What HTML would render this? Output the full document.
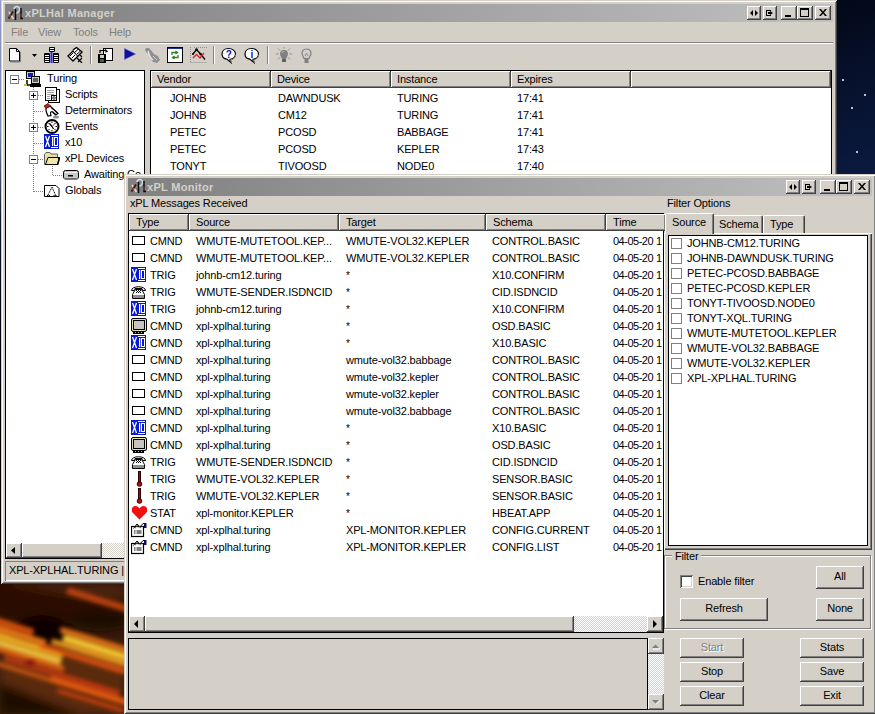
<!DOCTYPE html><html><head><meta charset="utf-8"><style>
*{margin:0;padding:0;box-sizing:border-box}
html,body{width:875px;height:714px;overflow:hidden}
body{position:relative;background:#0a1634;font-family:"Liberation Sans", sans-serif;font-size:11px;color:#000;letter-spacing:-0.15px}
.a{position:absolute}
.t{white-space:nowrap;line-height:13px}
.face{background:#d4d0c8}
.frame{background:#d4d0c8;box-shadow:inset 1px 1px #d4d0c8,inset -1px -1px #404040,inset 2px 2px #fff,inset -2px -2px #808080}
.btn{background:#d4d0c8;box-shadow:inset -1px -1px #404040,inset 1px 1px #fff,inset -2px -2px #808080,inset 2px 2px #d4d0c8}
.hdr{background:#d4d0c8;box-shadow:inset -1px -1px #404040,inset 1px 1px #fff,inset -2px -2px #808080}
.title{background:linear-gradient(90deg,#808080,#c0c0c0);color:#d4d0c8;font-weight:bold;letter-spacing:0.3px}
.white{background:#fff}
.blk{border:1px solid #000}
.dither{background-color:#fff;background-image:linear-gradient(45deg,#d4d0c8 25%,transparent 25%,transparent 75%,#d4d0c8 75%),linear-gradient(45deg,#d4d0c8 25%,transparent 25%,transparent 75%,#d4d0c8 75%);background-size:2px 2px;background-position:0 0,1px 1px}
.clip{overflow:hidden}
svg{display:block}
</style></head><body><div class="a" style="left:0;top:0;width:875px;height:714px;background:#0a1634"></div>
<div class="a" style="left:0;top:0;width:1px;height:584px;background:linear-gradient(180deg,#9898d0 0,#7888a8 130px,#101830 220px,#000 400px,#100804 583px)"></div>
<div class="a" style="left:836px;top:0;width:39px;height:175px;background:linear-gradient(160deg,#020816 0%,#06102a 40%,#0a1a40 100%)"></div>
<div class="a " style="left:842px;top:79px;width:2px;height:2px;background:#b8c0d8"></div>
<div class="a " style="left:864px;top:94px;width:2px;height:2px;background:#b8c0d8"></div>
<div class="a " style="left:851px;top:107px;width:2px;height:2px;background:#b8c0d8"></div>
<div class="a " style="left:856px;top:151px;width:2px;height:2px;background:#b8c0d8"></div>
<svg class="a" style="left:0;top:583px" width="124" height="131" viewBox="0 0 124 131">
<defs><filter id="bl" x="-30%" y="-30%" width="160%" height="160%"><feGaussianBlur stdDeviation="2"/></filter>
<filter id="bl2" x="-30%" y="-30%" width="160%" height="160%"><feGaussianBlur stdDeviation="5"/></filter></defs>
<rect width="124" height="131" fill="#3a1a0a"/>
<g filter="url(#bl2)">
<rect x="-10" y="-10" width="140" height="50" fill="#2a1006"/>
<path d="M0 0 H124 V20 L60 10 Z" fill="#4a2410"/>
<ellipse cx="42" cy="52" rx="30" ry="20" fill="#080302"/>
<ellipse cx="100" cy="38" rx="30" ry="10" fill="#1a0a04"/>
<path d="M0 60 L124 80 L124 131 H0 Z" fill="#5a2a0c"/>
<path d="M0 100 L80 131 H0 Z" fill="#1e0c04"/>
</g>
<g filter="url(#bl)" transform="rotate(17 62 65)">
<rect x="50" y="5" width="90" height="7" fill="#b84010"/>
<rect x="-30" y="55" width="60" height="6" fill="#d85010"/>
<rect x="-30" y="62" width="75" height="6" fill="#f07818"/>
<rect x="-30" y="69" width="95" height="6" fill="#f8b020"/>
<rect x="-20" y="76" width="85" height="5" fill="#ffd040"/>
<rect x="-30" y="82" width="100" height="5" fill="#e86010"/>
<rect x="55" y="45" width="90" height="6" fill="#e07018"/>
<rect x="60" y="52" width="90" height="6" fill="#ffd030"/>
<rect x="50" y="59" width="90" height="5" fill="#f8a020"/>
<rect x="40" y="66" width="90" height="6" fill="#d85010"/>
<rect x="10" y="89" width="120" height="5" fill="#c03808"/>
<rect x="-20" y="97" width="80" height="4" fill="#d05810"/>
<rect x="60" y="95" width="90" height="6" fill="#e85a10"/>
<rect x="70" y="105" width="70" height="4" fill="#c84010"/>
</g>
<ellipse cx="30" cy="80" rx="5" ry="3" fill="#801808" filter="url(#bl)"/>
</svg>
<div class="a frame" style="left:1px;top:0px;width:836px;height:584px;"></div>
<div class="a title a" style="left:5px;top:4px;width:828px;height:18px;"></div>
<div class="a " style="left:7px;top:5px;width:16px;height:16px;"><svg width="16" height="16" viewBox="0 0 16 16"><path d="M2 7 L6.5 14" stroke="#e8dcd8" stroke-width="1.5"/><path d="M1.5 13.5 L6 6.5" stroke="#3a1408" stroke-width="1.8"/><path d="M2.5 12 L4 10" stroke="#a04018" stroke-width="1.5"/><path d="M7 4 C7 0.5 13 0.5 12.5 4.5 C12 7.5 9.5 8.5 8 8" stroke="#d0dce8" stroke-width="1.5" fill="none"/><path d="M8.5 4 V15" stroke="#0a0a0a" stroke-width="1.5"/><path d="M14 3 V13.5 H16" stroke="#0a0a0a" stroke-width="1.4" fill="none"/><path d="M14 9 V12" stroke="#8a3a10" stroke-width="1.4"/></svg></div>
<div class="a t " style="left:25px;top:7px;color:#d4d0c8;font-weight:bold;letter-spacing:0.3px">xPLHal Manager</div>
<div class="a btn" style="left:815px;top:6px;width:16px;height:14px;"><svg width="16" height="14"><path d="M4 3h2l2 2.5 2-2.5h2l-3 3.5 3 3.5h-2l-2-2.5-2 2.5h-2l3-3.5z" fill="#000"/></svg></div><div class="a btn" style="left:797px;top:6px;width:16px;height:14px;"><svg width="16" height="14"><path d="M3 2h9v9h-9z M4 4v6h7v-6z" fill="#000" fill-rule="evenodd"/></svg></div><div class="a btn" style="left:781px;top:6px;width:16px;height:14px;"><svg width="16" height="14"><rect x="4" y="9" width="6" height="2" fill="#000"/></svg></div><div class="a btn" style="left:763px;top:6px;width:14px;height:14px;"><svg width="14" height="14"><path d="M3 4h5v1h-4v4h4v1h-5z M5 6h2v-1l3 2-3 2v-1h-2z" fill="#000"/></svg></div><div class="a btn" style="left:747px;top:6px;width:14px;height:14px;"><svg width="14" height="14"><path d="M6 4v6l-3-3z M8 4v6l3-3z" fill="#000"/></svg></div>
<div class="a t " style="left:11px;top:26px;color:#808080">File</div>
<div class="a t " style="left:38px;top:26px;color:#808080">View</div>
<div class="a t " style="left:73px;top:26px;color:#808080">Tools</div>
<div class="a t " style="left:109px;top:26px;color:#808080">Help</div>
<div class="a " style="left:5px;top:42px;width:828px;height:1px;background:#808080"></div>
<div class="a " style="left:5px;top:43px;width:828px;height:1px;background:#fff"></div>
<div class="a white blk" style="left:5px;top:70px;width:140px;height:489px;"></div>
<div class="a white blk" style="left:150px;top:70px;width:682px;height:489px;"></div>
<svg class="a" style="left:8px;top:47px" width="13" height="16" viewBox="0 0 13 16"><path d="M1.5 1.5h7l3 3v9.5h-10z" fill="#fff" stroke="#000"/><path d="M8.5 1.5v3h3" fill="none" stroke="#000"/><path d="M12.5 5v10h-10" stroke="#808080" fill="none"/></svg>
<svg class="a" style="left:32px;top:54px" width="5" height="3" viewBox="0 0 5 3"><path d="M0 0h5l-2.5 3z" fill="#000"/></svg>
<svg class="a" style="left:44px;top:47px" width="16" height="16" viewBox="0 0 16 16"><g fill="#000"><rect x="5" y="0" width="6" height="5" rx="1"/><rect x="0" y="6" width="6" height="10" rx="1"/><rect x="9" y="6" width="6" height="10" rx="1"/></g><g fill="#fff"><rect x="6" y="1" width="4" height="1"/><rect x="6" y="3" width="4" height="1"/><rect x="1" y="8" width="4" height="1"/><rect x="1" y="10" width="4" height="1"/><rect x="1" y="12" width="4" height="1"/><rect x="1" y="14" width="4" height="1"/><rect x="10" y="8" width="4" height="1"/><rect x="10" y="10" width="4" height="1"/><rect x="10" y="12" width="4" height="1"/><rect x="10" y="14" width="4" height="1"/></g><rect x="6.5" y="5" width="2" height="11" fill="#2828e0"/></svg>
<svg class="a" style="left:67px;top:47px" width="17" height="16" viewBox="0 0 17 16"><path d="M1 9 L6 4 L11 9 L6 14 Z" fill="#fff" stroke="#000" stroke-width="1.4"/><path d="M6 3 L9.5 0.5 L15 5 L11 9" fill="#fff" stroke="#000" stroke-width="1.4"/><path d="M3 9 L6 6 M5 11 L8 8 M8 5 L11 2.5 M10 7 L13 4.5" stroke="#000"/><path d="M10 11 L15 16 M15 11 L11 15 M13 8 L15 10" stroke="#000" stroke-width="1.2"/></svg>
<div class="a " style="left:90px;top:46px;width:1px;height:18px;background:#808080"></div>
<div class="a " style="left:91px;top:46px;width:1px;height:18px;background:#fff"></div>
<svg class="a" style="left:98px;top:47px" width="16" height="17" viewBox="0 0 16 17"><rect x="5.5" y="1.5" width="9" height="12" fill="#fff" stroke="#000"/><path d="M2 6 V3.5 H8 M7 2.5 L9 4.5 L7 5" stroke="#000" fill="none" stroke-width="1.2"/><rect x="0" y="7" width="8" height="9" fill="#000"/><rect x="2" y="8" width="4" height="3" fill="#d8d0b0"/><rect x="2" y="12" width="4" height="3" fill="#406040"/></svg>
<svg class="a" style="left:124px;top:48px" width="12" height="12" viewBox="0 0 12 12"><path d="M0.5 0.5 L11.5 6 L0.5 11.5z" fill="#1010a0" stroke="#6060c0" stroke-width="0.6"/></svg>
<svg class="a" style="left:144px;top:47px" width="17" height="17" viewBox="0 0 17 17"><path d="M1 3 C1 0.5 5 0.5 6 2 L10 7 L14 9 L16 13 L13 16 L9 15 L6 11 L5 7 L3 6 Z" fill="#909090"/><path d="M4 4 C5 8 6 11 9 13" stroke="#e8e8e8" stroke-width="1.3" fill="none"/><path d="M9 9 L13 13" stroke="#d0d0d0" fill="none"/></svg>
<svg class="a" style="left:167px;top:47px" width="16" height="16" viewBox="0 0 16 16"><rect x="0.5" y="0.5" width="15" height="15" fill="#fff" stroke="#000"/><rect x="1" y="1" width="14" height="1" fill="#2030a0"/><path d="M5 8 V5.5 H10 M8.5 4 L10.5 5.5 L8.5 7 M11 8 V10.5 H6 M7.5 9 L5.5 10.5 L7.5 12" stroke="#308030" stroke-width="1.3" fill="none"/></svg>
<svg class="a" style="left:190px;top:47px" width="17" height="16" viewBox="0 0 17 16"><path d="M0.5 0 V16 M0.5 15.5 H17 M4 0.5H17" stroke="#909090" stroke-dasharray="1 1"/><path d="M3 7 L6.5 2.5 L10.5 7 L15 12.5" stroke="#000" stroke-width="1.3" fill="none"/><path d="M3 11 L6.5 7.5 L10 11 L14 6" stroke="#e02020" stroke-width="1.3" fill="none"/><g fill="#000"><circle cx="6.5" cy="2.5" r="1.2"/><circle cx="10.5" cy="7" r="1.2"/><circle cx="3" cy="7" r="1"/></g></svg>
<div class="a " style="left:213px;top:46px;width:1px;height:18px;background:#808080"></div>
<div class="a " style="left:214px;top:46px;width:1px;height:18px;background:#fff"></div>
<svg class="a" style="left:221px;top:47px" width="16" height="17" viewBox="0 0 16 17"><path d="M7.5 1.5 C11.5 1.5 14.5 4 14.5 7 C14.5 10 12 12 9 12.3 L10 15.5 L6 12.2 C3 11.8 1 9.8 1 7 C1 4 3.5 1.5 7.5 1.5z" fill="#fff" stroke="#000" stroke-width="1.2"/><path d="M14.8 7.5 C14.5 10.5 12.5 12.5 9.5 13 L10.5 16" stroke="#808080" fill="none"/><text x="7.7" y="10.5" font-size="10" font-weight="bold" text-anchor="middle" fill="#1010c0" font-family="Liberation Sans">?</text></svg>
<svg class="a" style="left:244px;top:47px" width="16" height="17" viewBox="0 0 16 17"><path d="M7.5 1.5 C11.5 1.5 14.5 4 14.5 7 C14.5 10 12 12 9 12.3 L10 15.5 L6 12.2 C3 11.8 1 9.8 1 7 C1 4 3.5 1.5 7.5 1.5z" fill="#fff" stroke="#000" stroke-width="1.2"/><path d="M14.8 7.5 C14.5 10.5 12.5 12.5 9.5 13 L10.5 16" stroke="#808080" fill="none"/><text x="7.7" y="10.5" font-size="10" font-weight="bold" text-anchor="middle" fill="#1010c0" font-family="Liberation Sans">i</text></svg>
<div class="a " style="left:267px;top:46px;width:1px;height:18px;background:#808080"></div>
<div class="a " style="left:268px;top:46px;width:1px;height:18px;background:#fff"></div>
<svg class="a" style="left:276px;top:47px" width="16" height="17" viewBox="0 0 16 17"><path d="M8 3 C11 3 12 5 12 7 C12 9 10.5 10 10 12 H6 C5.5 10 4 9 4 7 C4 5 5 3 8 3z" fill="#808080"/><rect x="6" y="12" width="4" height="3" fill="#606060"/><path d="M0 7h2.5 M13.5 7h2.5 M2 1.5l2 2 M14 1.5l-2 2 M2 12.5l2-2 M14 12.5l-2-2 M8 0v1.5" stroke="#909090"/><path d="M6 6 C6 5 7 4.5 8 4.5" stroke="#c0c0c0" fill="none"/></svg>
<svg class="a" style="left:301px;top:48px" width="11" height="16" viewBox="0 0 11 16"><path d="M5.5 1 C9 1 10 3 10 5.5 C10 7.5 8.5 8.5 8 10.5 H3 C2.5 8.5 1 7.5 1 5.5 C1 3 2 1 5.5 1z" fill="#d0d0d0" stroke="#808080" stroke-width="1.2"/><rect x="3.5" y="11" width="4" height="4" fill="#808080"/><path d="M4 8 L5.5 5 L7 8" stroke="#909090" fill="none"/></svg>
<div class="a " style="left:33px;top:87px;width:1px;height:105px;background-image:linear-gradient(180deg,#808080 50%,transparent 50%);background-size:1px 2px"></div>
<div class="a " style="left:52px;top:166px;width:1px;height:10px;background-image:linear-gradient(180deg,#808080 50%,transparent 50%);background-size:1px 2px"></div>
<div class="a " style="left:34px;top:95px;width:10px;height:1px;background-image:linear-gradient(90deg,#808080 50%,transparent 50%);background-size:2px 1px"></div>
<div class="a " style="left:34px;top:111px;width:10px;height:1px;background-image:linear-gradient(90deg,#808080 50%,transparent 50%);background-size:2px 1px"></div>
<div class="a " style="left:34px;top:127px;width:10px;height:1px;background-image:linear-gradient(90deg,#808080 50%,transparent 50%);background-size:2px 1px"></div>
<div class="a " style="left:34px;top:143px;width:10px;height:1px;background-image:linear-gradient(90deg,#808080 50%,transparent 50%);background-size:2px 1px"></div>
<div class="a " style="left:34px;top:159px;width:10px;height:1px;background-image:linear-gradient(90deg,#808080 50%,transparent 50%);background-size:2px 1px"></div>
<div class="a " style="left:34px;top:191px;width:10px;height:1px;background-image:linear-gradient(90deg,#808080 50%,transparent 50%);background-size:2px 1px"></div>
<div class="a " style="left:19px;top:79px;width:5px;height:1px;background-image:linear-gradient(90deg,#808080 50%,transparent 50%);background-size:2px 1px"></div>
<div class="a " style="left:53px;top:175px;width:10px;height:1px;background-image:linear-gradient(90deg,#808080 50%,transparent 50%);background-size:2px 1px"></div>
<div class="a " style="left:10px;top:75px;width:9px;height:9px;background:#fff;border:1px solid #808080"></div><div class="a " style="left:12px;top:79px;width:5px;height:1px;background:#000"></div>
<div class="a " style="left:29px;top:91px;width:9px;height:9px;background:#fff;border:1px solid #808080"></div><div class="a " style="left:31px;top:95px;width:5px;height:1px;background:#000"></div><div class="a " style="left:33px;top:93px;width:1px;height:5px;background:#000"></div>
<div class="a " style="left:29px;top:123px;width:9px;height:9px;background:#fff;border:1px solid #808080"></div><div class="a " style="left:31px;top:127px;width:5px;height:1px;background:#000"></div><div class="a " style="left:33px;top:125px;width:1px;height:5px;background:#000"></div>
<div class="a " style="left:29px;top:155px;width:9px;height:9px;background:#fff;border:1px solid #808080"></div><div class="a " style="left:31px;top:159px;width:5px;height:1px;background:#000"></div>
<svg class="a" style="left:24px;top:71px" width="17" height="17" viewBox="0 0 17 17"><rect x="2.5" y="0.5" width="8" height="7" fill="#d4d0c8" stroke="#000"/><rect x="4" y="2" width="5" height="4" fill="#1020c0"/><rect x="7.5" y="5.5" width="8" height="7" fill="#d4d0c8" stroke="#000"/><rect x="9" y="7" width="5" height="4" fill="#606060"/><rect x="6" y="13" width="11" height="3" fill="#000"/><path d="M1 14h5 M3 9v5" stroke="#000" stroke-width="1.5"/><rect x="0" y="13" width="3" height="2" fill="#d0c040"/></svg>
<div class="a t " style="left:47px;top:72px;">Turing</div>
<svg class="a" style="left:45px;top:87px" width="15" height="16" viewBox="0 0 15 16"><rect x="3.5" y="2.5" width="11" height="13" fill="#fff" stroke="#000"/><rect x="0.5" y="0.5" width="11" height="13" fill="#fff" stroke="#000"/><path d="M2 3.5h7 M2 5.5h7 M2 7.5h7 M2 9.5h3 M2 11.5h3" stroke="#a0a0a0"/><rect x="6.5" y="8.5" width="5" height="5" fill="#fff" stroke="#000"/><circle cx="9" cy="11" r="1.3" fill="none" stroke="#000" stroke-width="0.8"/></svg>
<div class="a t " style="left:65px;top:88px;">Scripts</div>
<svg class="a" style="left:43px;top:103px" width="17" height="16" viewBox="0 0 17 16"><path d="M3 5 C2.5 8 4 11 5 13 L8 12.5 C7 10.5 7.5 8.5 9 8.5 L12.5 12 L15 10.5 L7 3 Z" fill="#fff" stroke="#000" stroke-width="1.2"/><path d="M8 4.5 L14 9.5 M9.5 8.5 L13 11.5" stroke="#000"/><path d="M1 3 L5 0.5 L7.5 3 L3 5.5 Z" fill="#c82010" stroke="#500" stroke-width="0.8"/><ellipse cx="13" cy="14" rx="3" ry="1.6" fill="#909090"/></svg>
<div class="a t " style="left:65px;top:104px;">Determinators</div>
<svg class="a" style="left:44px;top:119px" width="16" height="16" viewBox="0 0 16 16"><circle cx="8" cy="7.5" r="6.5" fill="#fff" stroke="#000" stroke-width="2"/><path d="M8 2.5v1.5 M8 11v1.5 M3 7.5h1.5 M11.5 7.5h1.5 M4.5 4l1 1 M11.5 4l-1 1 M4.5 11l1-1 M11.5 11l-1-1" stroke="#000"/><path d="M8 7.5 L5.5 4.5 M8 7.5 L9.5 10" stroke="#000" stroke-width="1.3"/><path d="M8 7.5 L11 4.5" stroke="#e02020"/></svg>
<div class="a t " style="left:65px;top:120px;">Events</div>
<div class="a " style="left:44px;top:134px;width:16px;height:16px;"><svg width="16" height="16"><rect x="0" y="0" width="15" height="15" fill="#0818d0"/><path d="M1.5 2 L5.5 13 M5.5 2 L1.5 13" stroke="#fff" stroke-width="1.3"/><rect x="7" y="1" width="7" height="1" fill="#fff"/><rect x="7" y="13" width="7" height="1" fill="#fff"/><rect x="8" y="3" width="1.3" height="9" fill="#fff"/><rect x="10.5" y="3.5" width="3" height="8" fill="none" stroke="#fff"/></svg></div>
<div class="a t " style="left:65px;top:136px;">x10</div>
<svg class="a" style="left:44px;top:152px" width="16" height="13" viewBox="0 0 16 13"><path d="M0.5 2.5 L2 0.5 H6 L7 2 H13.5 V12.5 H0.5 Z" fill="#e8e0a0" stroke="#606060"/><path d="M1.5 12.5 L4 5.5 H15.5 L13.5 12.5 Z" fill="#f0e8a8" stroke="#000"/><path d="M14 6 L15.5 6 L13.5 13 H1.5" stroke="#000" stroke-width="1.5" fill="none"/></svg>
<div class="a t " style="left:65px;top:152px;">xPL Devices</div>
<svg class="a" style="left:63px;top:170px" width="16" height="10" viewBox="0 0 16 10"><rect x="0.5" y="0.5" width="15" height="8.5" rx="2" fill="#c8c8c8" stroke="#000"/><rect x="5" y="5" width="5" height="1.5" fill="#000"/><path d="M2 2.5h12" stroke="#f0f0f0"/><path d="M1 8.5h14" stroke="#707070"/></svg>
<div class="a t " style="left:84px;top:168px;">Awaiting Co</div>
<svg class="a" style="left:44px;top:185px" width="16" height="12" viewBox="0 0 16 12"><path d="M0.5 0.5h11.5l3 3v8h-14.5z" fill="#fff" stroke="#000"/><path d="M4 10 L8 2 L11.5 10 M3 10.5h3 M9.5 10.5h3" stroke="#000" fill="none" stroke-dasharray="1.2 0.6"/></svg>
<div class="a t " style="left:65px;top:184px;">Globals</div>
<div class="a hdr" style="left:151px;top:71px;width:680px;height:17px;"></div>
<div class="a hdr" style="left:151px;top:71px;width:120px;height:17px;"><div class="t" style="position:absolute;left:6px;top:2px">Vendor</div></div>
<div class="a hdr" style="left:271px;top:71px;width:120px;height:17px;"><div class="t" style="position:absolute;left:6px;top:2px">Device</div></div>
<div class="a hdr" style="left:391px;top:71px;width:120px;height:17px;"><div class="t" style="position:absolute;left:6px;top:2px">Instance</div></div>
<div class="a hdr" style="left:511px;top:71px;width:120px;height:17px;"><div class="t" style="position:absolute;left:6px;top:2px">Expires</div></div>
<div class="a hdr" style="left:631px;top:71px;width:200px;height:17px;"></div>
<div class="a t " style="left:170px;top:92px;">JOHNB</div>
<div class="a t " style="left:278px;top:92px;">DAWNDUSK</div>
<div class="a t " style="left:397px;top:92px;">TURING</div>
<div class="a t " style="left:517px;top:92px;">17:41</div>
<div class="a t " style="left:170px;top:109px;">JOHNB</div>
<div class="a t " style="left:278px;top:109px;">CM12</div>
<div class="a t " style="left:397px;top:109px;">TURING</div>
<div class="a t " style="left:517px;top:109px;">17:41</div>
<div class="a t " style="left:170px;top:126px;">PETEC</div>
<div class="a t " style="left:278px;top:126px;">PCOSD</div>
<div class="a t " style="left:397px;top:126px;">BABBAGE</div>
<div class="a t " style="left:517px;top:126px;">17:41</div>
<div class="a t " style="left:170px;top:143px;">PETEC</div>
<div class="a t " style="left:278px;top:143px;">PCOSD</div>
<div class="a t " style="left:397px;top:143px;">KEPLER</div>
<div class="a t " style="left:517px;top:143px;">17:43</div>
<div class="a t " style="left:170px;top:160px;">TONYT</div>
<div class="a t " style="left:278px;top:160px;">TIVOOSD</div>
<div class="a t " style="left:397px;top:160px;">NODE0</div>
<div class="a t " style="left:517px;top:160px;">17:40</div>
<div class="a btn" style="left:6px;top:543px;width:16px;height:15px;"><svg width="16" height="15"><path d="M9 4v7l-4-3.5z" fill="#000"/></svg></div>
<div class="a btn" style="left:22px;top:543px;width:80px;height:15px;"></div>
<div class="a dither" style="left:102px;top:543px;width:42px;height:15px;"></div>
<div class="a " style="left:5px;top:561px;width:827px;height:20px;box-shadow:inset 1px 1px #808080,inset -1px -1px #fff"></div>
<div class="a t " style="left:9px;top:564px;">XPL-XPLHAL.TURING |</div>
<div class="a frame" style="left:124px;top:174px;width:752px;height:540px;"></div>
<div class="a title a" style="left:128px;top:178px;width:744px;height:18px;"></div>
<div class="a " style="left:130px;top:178px;width:16px;height:16px;"><svg width="16" height="16" viewBox="0 0 16 16"><path d="M2 7 L6.5 14" stroke="#e8dcd8" stroke-width="1.5"/><path d="M1.5 13.5 L6 6.5" stroke="#3a1408" stroke-width="1.8"/><path d="M2.5 12 L4 10" stroke="#a04018" stroke-width="1.5"/><path d="M7 4 C7 0.5 13 0.5 12.5 4.5 C12 7.5 9.5 8.5 8 8" stroke="#d0dce8" stroke-width="1.5" fill="none"/><path d="M8.5 4 V15" stroke="#0a0a0a" stroke-width="1.5"/><path d="M14 3 V13.5 H16" stroke="#0a0a0a" stroke-width="1.4" fill="none"/><path d="M14 9 V12" stroke="#8a3a10" stroke-width="1.4"/></svg></div>
<div class="a t " style="left:147px;top:181px;color:#d4d0c8;font-weight:bold;letter-spacing:0.3px">xPL Monitor</div>
<div class="a btn" style="left:854px;top:180px;width:16px;height:14px;"><svg width="16" height="14"><path d="M4 3h2l2 2.5 2-2.5h2l-3 3.5 3 3.5h-2l-2-2.5-2 2.5h-2l3-3.5z" fill="#000"/></svg></div><div class="a btn" style="left:836px;top:180px;width:16px;height:14px;"><svg width="16" height="14"><path d="M3 2h9v9h-9z M4 4v6h7v-6z" fill="#000" fill-rule="evenodd"/></svg></div><div class="a btn" style="left:820px;top:180px;width:16px;height:14px;"><svg width="16" height="14"><rect x="4" y="9" width="6" height="2" fill="#000"/></svg></div><div class="a btn" style="left:802px;top:180px;width:14px;height:14px;"><svg width="14" height="14"><path d="M3 4h5v1h-4v4h4v1h-5z M5 6h2v-1l3 2-3 2v-1h-2z" fill="#000"/></svg></div><div class="a btn" style="left:786px;top:180px;width:14px;height:14px;"><svg width="14" height="14"><path d="M6 4v6l-3-3z M8 4v6l3-3z" fill="#000"/></svg></div>
<div class="a t " style="left:130px;top:197px;">xPL Messages Received</div>
<div class="a t " style="left:667px;top:197px;">Filter Options</div>
<div class="a white blk" style="left:128px;top:213px;width:536px;height:420px;"></div>
<div class="a hdr" style="left:129px;top:214px;width:60px;height:17px;"><div class="t" style="position:absolute;left:7px;top:2px">Type</div></div>
<div class="a hdr" style="left:189px;top:214px;width:150px;height:17px;"><div class="t" style="position:absolute;left:7px;top:2px">Source</div></div>
<div class="a hdr" style="left:339px;top:214px;width:147px;height:17px;"><div class="t" style="position:absolute;left:7px;top:2px">Target</div></div>
<div class="a hdr" style="left:486px;top:214px;width:120px;height:17px;"><div class="t" style="position:absolute;left:7px;top:2px">Schema</div></div>
<div class="a hdr" style="left:606px;top:214px;width:60px;height:17px;"><div class="t" style="position:absolute;left:7px;top:2px">Time</div></div>
<div class="a" style="left:0;top:0;width:875px;height:714px;clip-path:inset(230px 212px 98px 129px)"><div class="a" style="left:131px;top:233px;width:16px;height:16px"><svg width="16" height="16"><rect x="1.5" y="3.5" width="12" height="8" fill="#fff" stroke="#000"/></svg></div><div class="a t " style="left:150px;top:235px;">CMND</div><div class="a t " style="left:196px;top:235px;">WMUTE-MUTETOOL.KEP...</div><div class="a t " style="left:346px;top:235px;">WMUTE-VOL32.KEPLER</div><div class="a t " style="left:492px;top:235px;">CONTROL.BASIC</div><div class="a t " style="left:613px;top:235px;letter-spacing:-0.5px">04-05-20</div><div class="a t " style="left:656px;top:235px;">1</div><div class="a" style="left:131px;top:250px;width:16px;height:16px"><svg width="16" height="16"><rect x="1.5" y="3.5" width="12" height="8" fill="#fff" stroke="#000"/></svg></div><div class="a t " style="left:150px;top:252px;">CMND</div><div class="a t " style="left:196px;top:252px;">WMUTE-MUTETOOL.KEP...</div><div class="a t " style="left:346px;top:252px;">WMUTE-VOL32.KEPLER</div><div class="a t " style="left:492px;top:252px;">CONTROL.BASIC</div><div class="a t " style="left:613px;top:252px;letter-spacing:-0.5px">04-05-20</div><div class="a t " style="left:656px;top:252px;">1</div><div class="a" style="left:131px;top:267px;width:16px;height:16px"><svg width="16" height="16"><rect x="0" y="0" width="15" height="15" fill="#0818d0"/><path d="M1.5 2 L5.5 13 M5.5 2 L1.5 13" stroke="#fff" stroke-width="1.3"/><rect x="7" y="1" width="7" height="1" fill="#fff"/><rect x="7" y="13" width="7" height="1" fill="#fff"/><rect x="8" y="3" width="1.3" height="9" fill="#fff"/><rect x="10.5" y="3.5" width="3" height="8" fill="none" stroke="#fff"/></svg></div><div class="a t " style="left:150px;top:269px;">TRIG</div><div class="a t " style="left:196px;top:269px;">johnb-cm12.turing</div><div class="a t " style="left:346px;top:269px;font-size:10px">*</div><div class="a t " style="left:492px;top:269px;">X10.CONFIRM</div><div class="a t " style="left:613px;top:269px;letter-spacing:-0.5px">04-05-20</div><div class="a t " style="left:656px;top:269px;">1</div><div class="a" style="left:131px;top:284px;width:16px;height:16px"><svg width="16" height="16"><path d="M0.5 6.5 C0.5 1.5 14.5 1.5 14.5 6.5 L11.5 6.5 L11 4.5 H4 L3.5 6.5 Z" fill="#fff" stroke="#000"/><path d="M3.5 7 L4.5 5.5 H10.5 L11.5 7 L13.5 10.5 V14.5 H1.5 V10.5 Z" fill="#fff" stroke="#000"/><rect x="2" y="11" width="11" height="3" fill="#909090"/><g fill="#000"><rect x="5" y="6" width="1" height="1"/><rect x="7" y="6" width="1" height="1"/><rect x="9" y="6" width="1" height="1"/><rect x="6" y="7" width="1" height="1"/><rect x="8" y="7" width="1" height="1"/><rect x="5" y="8" width="1" height="1"/><rect x="7" y="8" width="1" height="1"/><rect x="9" y="8" width="1" height="1"/></g></svg></div><div class="a t " style="left:150px;top:286px;">TRIG</div><div class="a t " style="left:196px;top:286px;">WMUTE-SENDER.ISDNCID</div><div class="a t " style="left:346px;top:286px;font-size:10px">*</div><div class="a t " style="left:492px;top:286px;">CID.ISDNCID</div><div class="a t " style="left:613px;top:286px;letter-spacing:-0.5px">04-05-20</div><div class="a t " style="left:656px;top:286px;">1</div><div class="a" style="left:131px;top:301px;width:16px;height:16px"><svg width="16" height="16"><rect x="0" y="0" width="15" height="15" fill="#0818d0"/><path d="M1.5 2 L5.5 13 M5.5 2 L1.5 13" stroke="#fff" stroke-width="1.3"/><rect x="7" y="1" width="7" height="1" fill="#fff"/><rect x="7" y="13" width="7" height="1" fill="#fff"/><rect x="8" y="3" width="1.3" height="9" fill="#fff"/><rect x="10.5" y="3.5" width="3" height="8" fill="none" stroke="#fff"/></svg></div><div class="a t " style="left:150px;top:303px;">TRIG</div><div class="a t " style="left:196px;top:303px;">johnb-cm12.turing</div><div class="a t " style="left:346px;top:303px;font-size:10px">*</div><div class="a t " style="left:492px;top:303px;">X10.CONFIRM</div><div class="a t " style="left:613px;top:303px;letter-spacing:-0.5px">04-05-20</div><div class="a t " style="left:656px;top:303px;">1</div><div class="a" style="left:131px;top:318px;width:16px;height:16px"><svg width="16" height="16"><rect x="0.5" y="0.5" width="15" height="13" rx="1.5" fill="#e8e0a8" stroke="#000"/><rect x="2.5" y="2.5" width="11" height="9" fill="#c8c4c4" stroke="#000"/><rect x="2" y="14" width="11" height="2" fill="#000"/><rect x="4" y="14" width="1" height="1" fill="#c0d080"/><rect x="7" y="14" width="1" height="1" fill="#c0d080"/><rect x="10" y="14" width="1" height="1" fill="#c0d080"/></svg></div><div class="a t " style="left:150px;top:320px;">CMND</div><div class="a t " style="left:196px;top:320px;">xpl-xplhal.turing</div><div class="a t " style="left:346px;top:320px;font-size:10px">*</div><div class="a t " style="left:492px;top:320px;">OSD.BASIC</div><div class="a t " style="left:613px;top:320px;letter-spacing:-0.5px">04-05-20</div><div class="a t " style="left:656px;top:320px;">1</div><div class="a" style="left:131px;top:335px;width:16px;height:16px"><svg width="16" height="16"><rect x="0" y="0" width="15" height="15" fill="#0818d0"/><path d="M1.5 2 L5.5 13 M5.5 2 L1.5 13" stroke="#fff" stroke-width="1.3"/><rect x="7" y="1" width="7" height="1" fill="#fff"/><rect x="7" y="13" width="7" height="1" fill="#fff"/><rect x="8" y="3" width="1.3" height="9" fill="#fff"/><rect x="10.5" y="3.5" width="3" height="8" fill="none" stroke="#fff"/></svg></div><div class="a t " style="left:150px;top:337px;">CMND</div><div class="a t " style="left:196px;top:337px;">xpl-xplhal.turing</div><div class="a t " style="left:346px;top:337px;font-size:10px">*</div><div class="a t " style="left:492px;top:337px;">X10.BASIC</div><div class="a t " style="left:613px;top:337px;letter-spacing:-0.5px">04-05-20</div><div class="a t " style="left:656px;top:337px;">1</div><div class="a" style="left:131px;top:352px;width:16px;height:16px"><svg width="16" height="16"><rect x="1.5" y="3.5" width="12" height="8" fill="#fff" stroke="#000"/></svg></div><div class="a t " style="left:150px;top:354px;">CMND</div><div class="a t " style="left:196px;top:354px;">xpl-xplhal.turing</div><div class="a t " style="left:346px;top:354px;">wmute-vol32.babbage</div><div class="a t " style="left:492px;top:354px;">CONTROL.BASIC</div><div class="a t " style="left:613px;top:354px;letter-spacing:-0.5px">04-05-20</div><div class="a t " style="left:656px;top:354px;">1</div><div class="a" style="left:131px;top:369px;width:16px;height:16px"><svg width="16" height="16"><rect x="1.5" y="3.5" width="12" height="8" fill="#fff" stroke="#000"/></svg></div><div class="a t " style="left:150px;top:371px;">CMND</div><div class="a t " style="left:196px;top:371px;">xpl-xplhal.turing</div><div class="a t " style="left:346px;top:371px;">wmute-vol32.kepler</div><div class="a t " style="left:492px;top:371px;">CONTROL.BASIC</div><div class="a t " style="left:613px;top:371px;letter-spacing:-0.5px">04-05-20</div><div class="a t " style="left:656px;top:371px;">1</div><div class="a" style="left:131px;top:386px;width:16px;height:16px"><svg width="16" height="16"><rect x="1.5" y="3.5" width="12" height="8" fill="#fff" stroke="#000"/></svg></div><div class="a t " style="left:150px;top:388px;">CMND</div><div class="a t " style="left:196px;top:388px;">xpl-xplhal.turing</div><div class="a t " style="left:346px;top:388px;">wmute-vol32.kepler</div><div class="a t " style="left:492px;top:388px;">CONTROL.BASIC</div><div class="a t " style="left:613px;top:388px;letter-spacing:-0.5px">04-05-20</div><div class="a t " style="left:656px;top:388px;">1</div><div class="a" style="left:131px;top:403px;width:16px;height:16px"><svg width="16" height="16"><rect x="1.5" y="3.5" width="12" height="8" fill="#fff" stroke="#000"/></svg></div><div class="a t " style="left:150px;top:405px;">CMND</div><div class="a t " style="left:196px;top:405px;">xpl-xplhal.turing</div><div class="a t " style="left:346px;top:405px;">wmute-vol32.babbage</div><div class="a t " style="left:492px;top:405px;">CONTROL.BASIC</div><div class="a t " style="left:613px;top:405px;letter-spacing:-0.5px">04-05-20</div><div class="a t " style="left:656px;top:405px;">1</div><div class="a" style="left:131px;top:420px;width:16px;height:16px"><svg width="16" height="16"><rect x="0" y="0" width="15" height="15" fill="#0818d0"/><path d="M1.5 2 L5.5 13 M5.5 2 L1.5 13" stroke="#fff" stroke-width="1.3"/><rect x="7" y="1" width="7" height="1" fill="#fff"/><rect x="7" y="13" width="7" height="1" fill="#fff"/><rect x="8" y="3" width="1.3" height="9" fill="#fff"/><rect x="10.5" y="3.5" width="3" height="8" fill="none" stroke="#fff"/></svg></div><div class="a t " style="left:150px;top:422px;">CMND</div><div class="a t " style="left:196px;top:422px;">xpl-xplhal.turing</div><div class="a t " style="left:346px;top:422px;font-size:10px">*</div><div class="a t " style="left:492px;top:422px;">X10.BASIC</div><div class="a t " style="left:613px;top:422px;letter-spacing:-0.5px">04-05-20</div><div class="a t " style="left:656px;top:422px;">1</div><div class="a" style="left:131px;top:437px;width:16px;height:16px"><svg width="16" height="16"><rect x="0.5" y="0.5" width="15" height="13" rx="1.5" fill="#e8e0a8" stroke="#000"/><rect x="2.5" y="2.5" width="11" height="9" fill="#c8c4c4" stroke="#000"/><rect x="2" y="14" width="11" height="2" fill="#000"/><rect x="4" y="14" width="1" height="1" fill="#c0d080"/><rect x="7" y="14" width="1" height="1" fill="#c0d080"/><rect x="10" y="14" width="1" height="1" fill="#c0d080"/></svg></div><div class="a t " style="left:150px;top:439px;">CMND</div><div class="a t " style="left:196px;top:439px;">xpl-xplhal.turing</div><div class="a t " style="left:346px;top:439px;font-size:10px">*</div><div class="a t " style="left:492px;top:439px;">OSD.BASIC</div><div class="a t " style="left:613px;top:439px;letter-spacing:-0.5px">04-05-20</div><div class="a t " style="left:656px;top:439px;">1</div><div class="a" style="left:131px;top:454px;width:16px;height:16px"><svg width="16" height="16"><path d="M0.5 6.5 C0.5 1.5 14.5 1.5 14.5 6.5 L11.5 6.5 L11 4.5 H4 L3.5 6.5 Z" fill="#fff" stroke="#000"/><path d="M3.5 7 L4.5 5.5 H10.5 L11.5 7 L13.5 10.5 V14.5 H1.5 V10.5 Z" fill="#fff" stroke="#000"/><rect x="2" y="11" width="11" height="3" fill="#909090"/><g fill="#000"><rect x="5" y="6" width="1" height="1"/><rect x="7" y="6" width="1" height="1"/><rect x="9" y="6" width="1" height="1"/><rect x="6" y="7" width="1" height="1"/><rect x="8" y="7" width="1" height="1"/><rect x="5" y="8" width="1" height="1"/><rect x="7" y="8" width="1" height="1"/><rect x="9" y="8" width="1" height="1"/></g></svg></div><div class="a t " style="left:150px;top:456px;">TRIG</div><div class="a t " style="left:196px;top:456px;">WMUTE-SENDER.ISDNCID</div><div class="a t " style="left:346px;top:456px;font-size:10px">*</div><div class="a t " style="left:492px;top:456px;">CID.ISDNCID</div><div class="a t " style="left:613px;top:456px;letter-spacing:-0.5px">04-05-20</div><div class="a t " style="left:656px;top:456px;">1</div><div class="a" style="left:131px;top:471px;width:16px;height:16px"><svg width="16" height="16"><rect x="7.5" y="0.5" width="2" height="11" fill="#a01010" stroke="#300000"/><circle cx="8.5" cy="13" r="2.3" fill="#b01010" stroke="#300000"/></svg></div><div class="a t " style="left:150px;top:473px;">TRIG</div><div class="a t " style="left:196px;top:473px;">WMUTE-VOL32.KEPLER</div><div class="a t " style="left:346px;top:473px;font-size:10px">*</div><div class="a t " style="left:492px;top:473px;">SENSOR.BASIC</div><div class="a t " style="left:613px;top:473px;letter-spacing:-0.5px">04-05-20</div><div class="a t " style="left:656px;top:473px;">1</div><div class="a" style="left:131px;top:488px;width:16px;height:16px"><svg width="16" height="16"><rect x="7.5" y="0.5" width="2" height="11" fill="#a01010" stroke="#300000"/><circle cx="8.5" cy="13" r="2.3" fill="#b01010" stroke="#300000"/></svg></div><div class="a t " style="left:150px;top:490px;">TRIG</div><div class="a t " style="left:196px;top:490px;">WMUTE-VOL32.KEPLER</div><div class="a t " style="left:346px;top:490px;font-size:10px">*</div><div class="a t " style="left:492px;top:490px;">SENSOR.BASIC</div><div class="a t " style="left:613px;top:490px;letter-spacing:-0.5px">04-05-20</div><div class="a t " style="left:656px;top:490px;">1</div><div class="a" style="left:131px;top:505px;width:16px;height:16px"><svg width="16" height="16"><path d="M8.5 14.5 L1.5 7.5 C0 5.5 0.5 1 4.5 1 C6.5 1 8 2.5 8.5 3.5 C9 2.5 10.5 1 12.5 1 C16.5 1 17 5.5 15.5 7.5 Z" fill="#f01010"/></svg></div><div class="a t " style="left:150px;top:507px;">STAT</div><div class="a t " style="left:196px;top:507px;">xpl-monitor.KEPLER</div><div class="a t " style="left:346px;top:507px;font-size:10px">*</div><div class="a t " style="left:492px;top:507px;">HBEAT.APP</div><div class="a t " style="left:613px;top:507px;letter-spacing:-0.5px">04-05-20</div><div class="a t " style="left:656px;top:507px;">1</div><div class="a" style="left:131px;top:522px;width:16px;height:16px"><svg width="16" height="16"><rect x="0.5" y="4.5" width="12" height="10" fill="#fff" stroke="#000" stroke-width="1.2"/><path d="M3 9h1.5 M5.5 9h5 M3 11h1.5 M5.5 11h5" stroke="#000"/><path d="M2.5 6.5 L6 2 L9 5 L12 1.5 H14" stroke="#000" fill="none"/><path d="M4 6 L6.5 3 L9 6 L11 4" stroke="#606060" stroke-width="1.5" stroke-dasharray="1 1" fill="none"/><rect x="13" y="1" width="2.5" height="5" fill="#101050"/></svg></div><div class="a t " style="left:150px;top:524px;">CMND</div><div class="a t " style="left:196px;top:524px;">xpl-xplhal.turing</div><div class="a t " style="left:346px;top:524px;">XPL-MONITOR.KEPLER</div><div class="a t " style="left:492px;top:524px;">CONFIG.CURRENT</div><div class="a t " style="left:613px;top:524px;letter-spacing:-0.5px">04-05-20</div><div class="a t " style="left:656px;top:524px;">1</div><div class="a" style="left:131px;top:539px;width:16px;height:16px"><svg width="16" height="16"><rect x="0.5" y="4.5" width="12" height="10" fill="#fff" stroke="#000" stroke-width="1.2"/><path d="M3 9h1.5 M5.5 9h5 M3 11h1.5 M5.5 11h5" stroke="#000"/><path d="M2.5 6.5 L6 2 L9 5 L12 1.5 H14" stroke="#000" fill="none"/><path d="M4 6 L6.5 3 L9 6 L11 4" stroke="#606060" stroke-width="1.5" stroke-dasharray="1 1" fill="none"/><rect x="13" y="1" width="2.5" height="5" fill="#101050"/></svg></div><div class="a t " style="left:150px;top:541px;">CMND</div><div class="a t " style="left:196px;top:541px;">xpl-xplhal.turing</div><div class="a t " style="left:346px;top:541px;">XPL-MONITOR.KEPLER</div><div class="a t " style="left:492px;top:541px;">CONFIG.LIST</div><div class="a t " style="left:613px;top:541px;letter-spacing:-0.5px">04-05-20</div><div class="a t " style="left:656px;top:541px;">1</div></div>
<div class="a btn" style="left:129px;top:616px;width:16px;height:16px;"><svg width="16" height="16"><path d="M9 4v8l-4-4z" fill="#000"/></svg></div>
<div class="a btn" style="left:145px;top:616px;width:429px;height:16px;"></div>
<div class="a dither" style="left:574px;top:616px;width:73px;height:16px;"></div>
<div class="a btn" style="left:647px;top:616px;width:16px;height:16px;"><svg width="16" height="16"><path d="M6 4v8l4-4z" fill="#000"/></svg></div>
<div class="a " style="left:128px;top:638px;width:520px;height:72px;background:#d4d0c8;border:1px solid #000"></div>
<div class="a dither" style="left:648px;top:638px;width:16px;height:72px;"></div>
<div class="a btn" style="left:648px;top:638px;width:16px;height:16px;"><svg width="16" height="16"><path d="M4 10h7l-3.5-3.5z" fill="#808080"/><path d="M5 11h7" stroke="#fff"/></svg></div>
<div class="a btn" style="left:648px;top:694px;width:16px;height:16px;"><svg width="16" height="16"><path d="M4 6h7l-3.5 3.5z" fill="#808080"/><path d="M8 10.5l4-4" stroke="#fff"/></svg></div>
<div class="a " style="left:664px;top:233px;width:208px;height:317px;background:#d4d0c8;box-shadow:inset 1px 1px #fff,inset -1px -1px #404040,inset -2px -2px #808080"></div>
<div class="a" style="left:713px;top:215px;width:50px;height:18px;background:#d4d0c8;border-top:1px solid #fff;border-left:1px solid #fff;border-right:1px solid #404040;border-radius:2px 2px 0 0;box-shadow:inset -1px 0 #808080"></div><div class="a t " style="left:719px;top:218px;">Schema</div>
<div class="a" style="left:763px;top:215px;width:42px;height:18px;background:#d4d0c8;border-top:1px solid #fff;border-left:1px solid #fff;border-right:1px solid #404040;border-radius:2px 2px 0 0;box-shadow:inset -1px 0 #808080"></div><div class="a t " style="left:770px;top:218px;">Type</div>
<div class="a" style="left:665px;top:213px;width:49px;height:21px;background:#d4d0c8;border-top:1px solid #fff;border-left:1px solid #fff;border-right:1px solid #404040;border-radius:2px 2px 0 0;box-shadow:inset -1px 0 #808080"></div><div class="a t " style="left:672px;top:216px;">Source</div>
<div class="a " style="left:666px;top:233px;width:46px;height:2px;background:#d4d0c8"></div>
<div class="a white blk" style="left:668px;top:235px;width:200px;height:311px;"></div>
<div class="a " style="left:671px;top:238px;width:11px;height:11px;background:#fff;border:1px solid #808080"></div>
<div class="a t " style="left:687px;top:237px;">JOHNB-CM12.TURING</div>
<div class="a " style="left:671px;top:253px;width:11px;height:11px;background:#fff;border:1px solid #808080"></div>
<div class="a t " style="left:687px;top:252px;">JOHNB-DAWNDUSK.TURING</div>
<div class="a " style="left:671px;top:268px;width:11px;height:11px;background:#fff;border:1px solid #808080"></div>
<div class="a t " style="left:687px;top:267px;">PETEC-PCOSD.BABBAGE</div>
<div class="a " style="left:671px;top:283px;width:11px;height:11px;background:#fff;border:1px solid #808080"></div>
<div class="a t " style="left:687px;top:282px;">PETEC-PCOSD.KEPLER</div>
<div class="a " style="left:671px;top:298px;width:11px;height:11px;background:#fff;border:1px solid #808080"></div>
<div class="a t " style="left:687px;top:297px;">TONYT-TIVOOSD.NODE0</div>
<div class="a " style="left:671px;top:313px;width:11px;height:11px;background:#fff;border:1px solid #808080"></div>
<div class="a t " style="left:687px;top:312px;">TONYT-XQL.TURING</div>
<div class="a " style="left:671px;top:328px;width:11px;height:11px;background:#fff;border:1px solid #808080"></div>
<div class="a t " style="left:687px;top:327px;">WMUTE-MUTETOOL.KEPLER</div>
<div class="a " style="left:671px;top:343px;width:11px;height:11px;background:#fff;border:1px solid #808080"></div>
<div class="a t " style="left:687px;top:342px;">WMUTE-VOL32.BABBAGE</div>
<div class="a " style="left:671px;top:358px;width:11px;height:11px;background:#fff;border:1px solid #808080"></div>
<div class="a t " style="left:687px;top:357px;">WMUTE-VOL32.KEPLER</div>
<div class="a " style="left:671px;top:373px;width:11px;height:11px;background:#fff;border:1px solid #808080"></div>
<div class="a t " style="left:687px;top:372px;">XPL-XPLHAL.TURING</div>
<div class="a " style="left:664px;top:555px;width:207px;height:74px;border:1px solid #808080;box-shadow:1px 1px #fff,inset 1px 1px #fff"></div>
<div class="a t " style="left:672px;top:550px;background:#d4d0c8">&nbsp;Filter&nbsp;</div>
<div class="a " style="left:680px;top:575px;width:13px;height:13px;background:#fff;box-shadow:inset 1px 1px #808080,inset -1px -1px #fff,inset 2px 2px #404040,inset -2px -2px #d4d0c8"></div>
<div class="a t " style="left:698px;top:575px;">Enable filter</div>
<div class="a btn" style="left:816px;top:566px;width:48px;height:23px;"><div class="t" style="position:absolute;left:0;width:100%;text-align:center;top:4px;color:#000">All</div></div>
<div class="a btn" style="left:816px;top:598px;width:48px;height:23px;"><div class="t" style="position:absolute;left:0;width:100%;text-align:center;top:4px;color:#000">None</div></div>
<div class="a btn" style="left:680px;top:598px;width:88px;height:23px;"><div class="t" style="position:absolute;left:0;width:100%;text-align:center;top:4px;color:#000">Refresh</div></div>
<div class="a btn" style="left:680px;top:638px;width:64px;height:20px;"><div class="t" style="position:absolute;left:0;width:100%;text-align:center;top:3px;color:#808080"><span style="text-shadow:1px 1px #fff">Start</span></div></div>
<div class="a btn" style="left:680px;top:662px;width:64px;height:20px;"><div class="t" style="position:absolute;left:0;width:100%;text-align:center;top:3px;color:#000">Stop</div></div>
<div class="a btn" style="left:680px;top:686px;width:64px;height:20px;"><div class="t" style="position:absolute;left:0;width:100%;text-align:center;top:3px;color:#000">Clear</div></div>
<div class="a btn" style="left:800px;top:638px;width:64px;height:20px;"><div class="t" style="position:absolute;left:0;width:100%;text-align:center;top:3px;color:#000">Stats</div></div>
<div class="a btn" style="left:800px;top:662px;width:64px;height:20px;"><div class="t" style="position:absolute;left:0;width:100%;text-align:center;top:3px;color:#000">Save</div></div>
<div class="a btn" style="left:800px;top:686px;width:64px;height:20px;"><div class="t" style="position:absolute;left:0;width:100%;text-align:center;top:3px;color:#000">Exit</div></div></body></html>
